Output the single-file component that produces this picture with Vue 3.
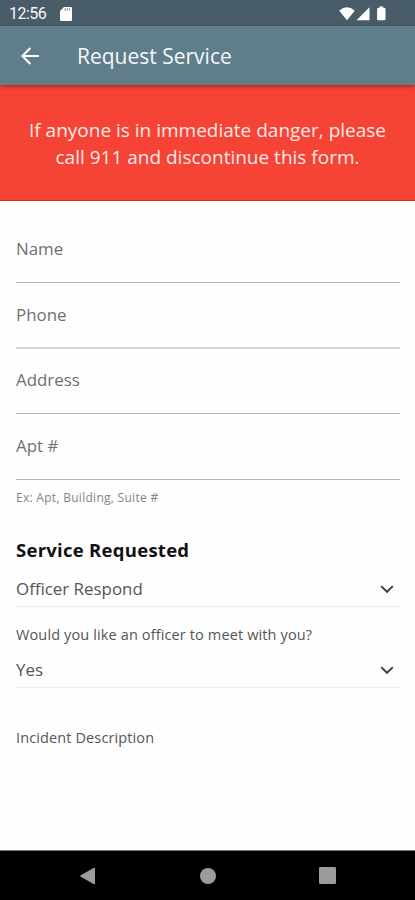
<script setup>
const fields = [
  { label: 'Name' },
  { label: 'Phone', soft: true },
  { label: 'Address' },
  { label: 'Apt #' },
]
</script>

<template>
  <div class="screen">
    <header class="status">
      <span class="clock">12:56</span>
      <svg class="sd" width="12" height="14" viewBox="0 0 12 14">
        <path d="M4 0H10.8Q12 0 12 1.2V12.8Q12 14 10.8 14H1.2Q0 14 0 12.8V4Z" fill="#fff" />
        <path d="M4.5 1.2h1.2v2.5H4.5zM6.8 1.2H8v2.5H6.8zM9 1.2h1.2v2.5H9z" fill="#8c999f" />
      </svg>
      <svg class="signals" width="49" height="16" viewBox="0 0 49 16">
        <path d="M1.2 4.7Q9 -2 16.8 4.7L9 14.3Z" fill="#fff" />
        <path d="M31.5 1.3V14.3H18.5Z" fill="#fff" />
        <path d="M41.3 0.4h4v1.6h1.2q1 0 1 1V13.3q0 1-1 1h-6.4q-1 0-1-1V3q0-1 1-1H41.3z" fill="#fff" />
      </svg>
    </header>

    <nav class="toolbar">
      <svg width="20" height="18" viewBox="0 0 20 18" fill="none" stroke="#fff" stroke-width="2">
        <path d="M19 9H2.6M10.4 1L2.4 9L10.4 17" />
      </svg>
      <h1>Request Service</h1>
    </nav>

    <section class="banner">
      <p>If anyone is in immediate danger, please<br />call 911 and discontinue this form.</p>
    </section>

    <main class="form">
      <div v-for="f in fields" :key="f.label" class="field" :class="{ soft: f.soft }">
        <label>{{ f.label }}</label>
      </div>
      <p class="hint">Ex: Apt, Building, Suite #</p>
      <h2>Service Requested</h2>
      <div class="select">
        <span>Officer Respond</span>
        <svg width="14" height="9" viewBox="0 0 14 9" fill="none" stroke="#424242" stroke-width="2">
          <path d="M1.2 1.1L7 6.8L12.8 1.1" />
        </svg>
      </div>
      <p class="question">Would you like an officer to meet with you?</p>
      <div class="select second">
        <span>Yes</span>
        <svg width="14" height="9" viewBox="0 0 14 9" fill="none" stroke="#424242" stroke-width="2">
          <path d="M1.2 1.1L7 6.8L12.8 1.1" />
        </svg>
      </div>
      <p class="incident">Incident Description</p>
    </main>

    <footer class="navbar">
      <svg width="17" height="18" viewBox="0 0 17 18"><path d="M0.5 9L15 0.8Q16 0.4 16 1.3V16.7Q16 17.6 15 17.2Z" fill="#9c9c9c" /></svg>
      <svg width="16" height="16" viewBox="0 0 16 16"><circle cx="8" cy="8" r="8" fill="#9c9c9c" /></svg>
      <svg width="17" height="17" viewBox="0 0 17 17"><rect width="17" height="17" rx="1.2" fill="#9c9c9c" /></svg>
    </footer>
  </div>
</template>

<style>
body {
  margin: 0;
  background: #fefefe;
}
</style>

<style scoped>
.screen {
  width: 415px;
  height: 900px;
  display: flex;
  flex-direction: column;
  background: #fefefe;
  font-family: 'Open Sans', sans-serif;
  overflow: hidden;
}
h1, h2, p {
  margin: 0;
  font-weight: 400;
  white-space: nowrap;
}
svg {
  display: block;
  flex: none;
}
.status {
  height: 26px;
  flex: none;
  display: flex;
  align-items: center;
  box-sizing: border-box;
  padding: 1px 28px 0 9px;
  background: #495d68;
  color: #f4f6f7;
}
.clock {
  font: 400 16px/20px Roboto, sans-serif;
  letter-spacing: -0.5px;
  width: 50.5px;
}
.signals {
  margin-left: auto;
}
.toolbar {
  position: relative;
  z-index: 1;
  height: 59px;
  flex: none;
  display: flex;
  align-items: center;
  box-sizing: border-box;
  padding-left: 20px;
  gap: 37px;
  background: #607d8b;
  color: #f4f8fa;
  box-shadow: 0 1px 4px rgba(0, 0, 0, 0.4);
}
h1 {
  font-size: 21px;
  line-height: 28px;
}
.banner {
  height: 116px;
  flex: none;
  box-sizing: border-box;
  padding-top: 32px;
  background: #f54336;
  border-bottom: 1px solid #e32c1c;
  color: #ffe9e6;
  text-align: center;
}
.banner p {
  font-size: 19px;
  line-height: 27px;
}
.form {
  flex: 1;
  display: flex;
  flex-direction: column;
  padding: 16px 15px 0 16px;
  color: #555;
}
.field {
  height: 65.7px;
  flex: none;
  box-sizing: border-box;
  padding-top: 21px;
  border-bottom: 1px solid #b4b4b4;
  font-size: 16.9px;
  line-height: 22px;
  color: #707070;
}
.field.soft {
  height: 66.4px;
  margin-bottom: -0.7px;
  border-bottom: 2px solid #d6d6d6;
}
.hint {
  margin-top: 9px;
  font-size: 12px;
  line-height: 18px;
  letter-spacing: 0.28px;
  color: #858585;
}
h2 {
  margin-top: 30px;
  margin-bottom: 1px;
  font-size: 18.5px;
  letter-spacing: 0.27px;
  line-height: 26px;
  font-weight: 700;
  color: #111;
}
.select {
  height: 43px;
  flex: none;
  box-sizing: border-box;
  display: flex;
  justify-content: space-between;
  align-items: center;
  padding: 9px 6px 0 0;
  border-bottom: 1px solid #ededed;
  font-size: 16.9px;
  line-height: 22px;
}
.question {
  margin-top: 18px;
  margin-bottom: 1px;
  font-size: 14.5px;
  letter-spacing: 0.13px;
  line-height: 20px;
}
.select.second {
  height: 42px;
  padding-top: 8px;
}
.incident {
  margin-top: 40px;
  font-size: 14.5px;
  letter-spacing: 0.12px;
  line-height: 20px;
}
.navbar {
  height: 50px;
  flex: none;
  box-sizing: border-box;
  display: flex;
  align-items: center;
  justify-content: space-between;
  padding: 0 79px;
  background: #000;
  border-top: 1px solid #777;
}
</style>
